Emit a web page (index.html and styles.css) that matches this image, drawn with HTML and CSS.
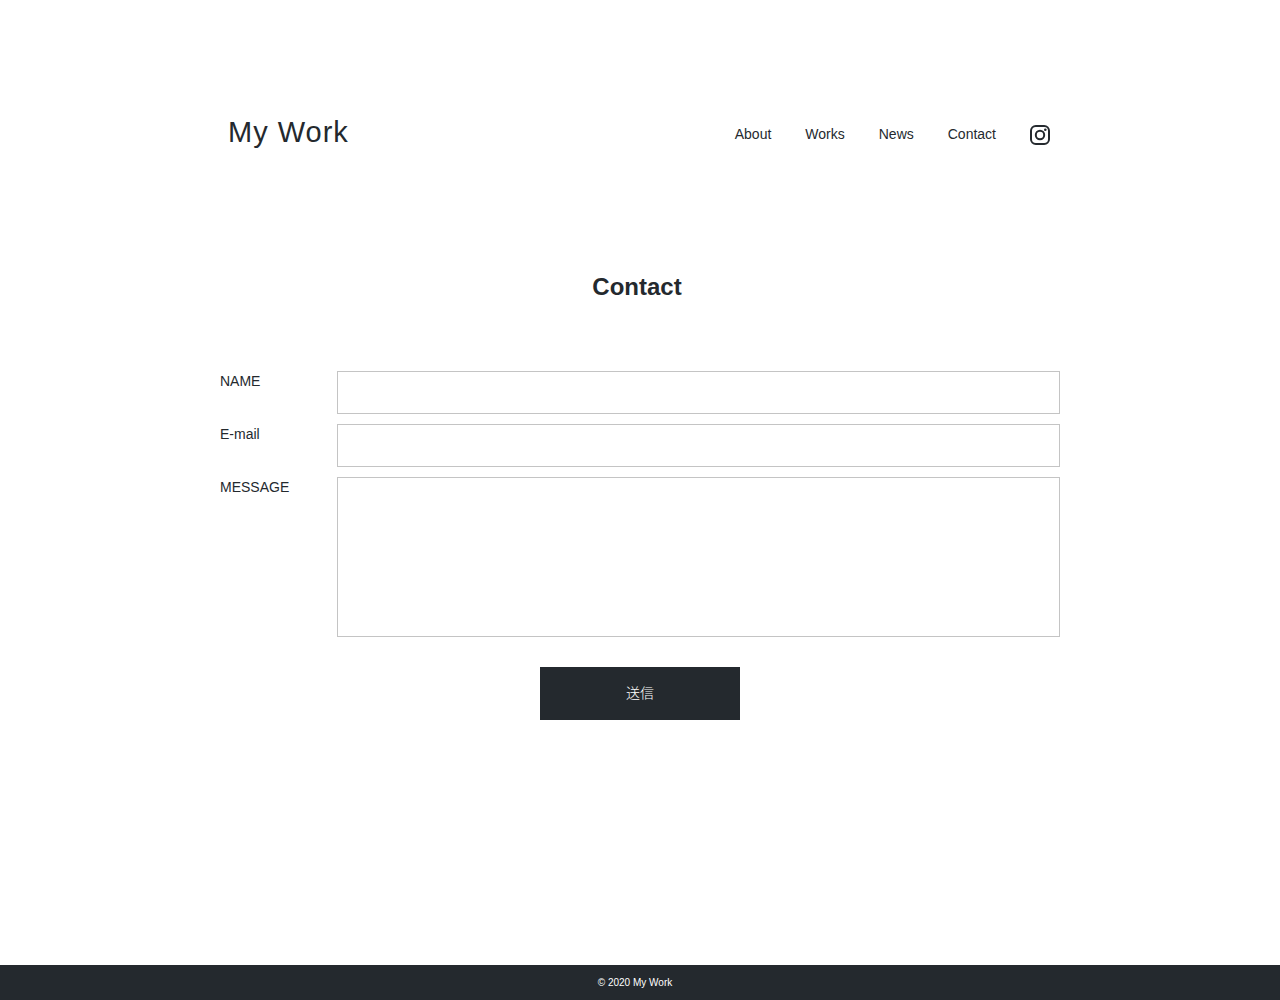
FILE: index.html
```html
<!DOCTYPE html>
<html lang="ja">
<head>
<meta charset="utf-8">
<meta name="viewport" content="width=device-width, initial-scale=1">
<title>My Work | Contact</title>
<link rel="stylesheet" href="styles.css">
</head>
<body>
<header class="header">
  <h1 class="logo"><a href="#">My Work</a></h1>
  <nav class="nav">
    <a class="nav-link" href="#about">About</a>
    <a class="nav-link" href="#works">Works</a>
    <a class="nav-link" href="#news">News</a>
    <a class="nav-link" href="#contact">Contact</a>
    <a class="instagram" href="#instagram" aria-label="Instagram">
      <svg viewBox="0 0 20 20" width="20" height="20" fill="none" stroke="currentColor" stroke-width="2" aria-hidden="true">
        <rect x="1" y="1" width="18" height="18" rx="4.8"/>
        <circle cx="10" cy="10" r="4.2"/>
        <circle cx="15.3" cy="4.7" r="1.3" fill="currentColor" stroke="none"/>
      </svg>
    </a>
  </nav>
</header>
<main class="contact" id="contact">
  <h2 class="title">Contact</h2>
  <form class="form">
    <label for="name">NAME</label>
    <input class="field" id="name" type="text" name="name">
    <label for="email">E-mail</label>
    <input class="field" id="email" type="email" name="email">
    <label for="message">MESSAGE</label>
    <textarea class="field message" id="message" name="message"></textarea>
    <button class="submit" type="submit">送信</button>
  </form>
</main>
<footer class="footer"><small>© 2020 My Work</small></footer>
</body>
</html>
```
FILE: styles.css
```css
* {
  box-sizing: border-box;
}

body {
  display: flex;
  flex-direction: column;
  min-height: 100vh;
  margin: 0;
  color: #24292e;
  background: #fff;
  font: 14px/20px "Liberation Sans", Arial, "Noto Sans CJK JP", sans-serif;
}

a {
  color: inherit;
  text-decoration: none;
}

.header {
  display: flex;
  align-items: flex-start;
  justify-content: space-between;
  width: 100%;
  max-width: 840px;
  margin: 115px auto 0;
  padding: 0 10px 0 8px;
}

.logo {
  margin: 0;
  font-size: 29px;
  font-weight: 400;
  line-height: 34px;
  letter-spacing: 1px;
}

.nav {
  display: flex;
  align-items: center;
  gap: 34px;
  min-height: 40px;
}

.nav-link {
  padding-bottom: 2px;
}

.instagram {
  display: flex;
}

.contact {
  width: 100%;
  max-width: 840px;
  margin: 112px auto 0;
}

.title {
  margin: 0 0 64px;
  padding-right: 6px;
  font-size: 24px;
  line-height: 40px;
  text-align: center;
}

.form {
  display: grid;
  grid-template-columns: 117px 1fr;
  row-gap: 10px;
}

.field {
  width: 100%;
  height: 43px;
  padding: 10px;
  border: 1px solid #c4c4c4;
  border-radius: 0;
  background: #fff;
  color: inherit;
  font: inherit;
}

.message {
  display: block;
  height: 160px;
  resize: none;
}

.submit {
  grid-column: 1 / -1;
  justify-self: center;
  width: 200px;
  height: 53px;
  margin-top: 20px;
  padding: 0 0 2px;
  border: 0;
  background: #24292e;
  color: #fff;
  font: inherit;
  font-weight: 300;
}

.footer {
  margin-top: auto;
  padding: 8px 10px 7px 0;
  background: #24292e;
  color: #fff;
  text-align: center;
}

.footer small {
  display: block;
  font-size: 10px;
}
```
